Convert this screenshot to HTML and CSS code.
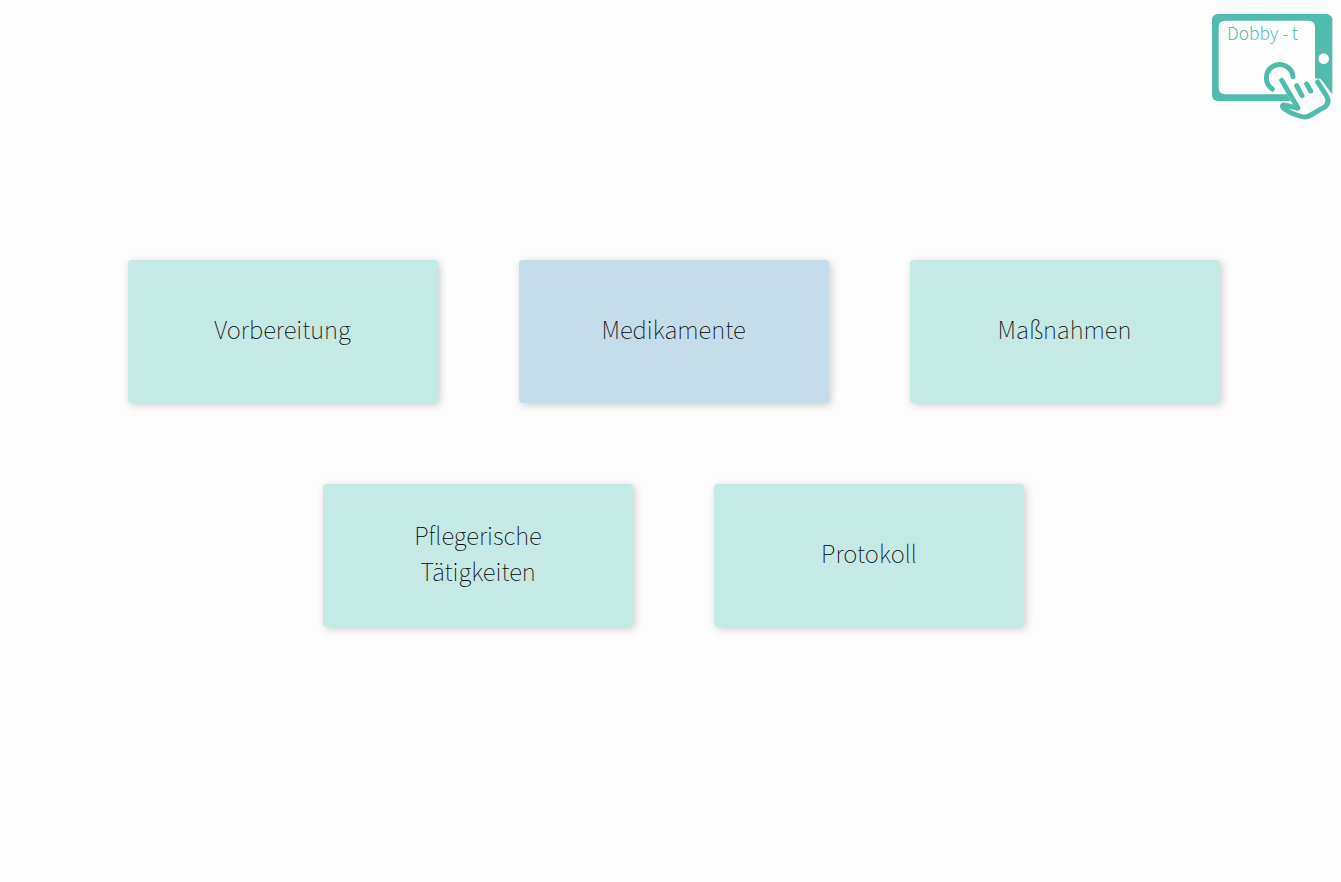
FILE: index.html
```html
<!DOCTYPE html>
<html lang="de">
<head>
  <meta charset="utf-8">
  <meta name="viewport" content="width=device-width, initial-scale=1">
  <title>Dobby - t</title>
  <link rel="stylesheet" href="styles.css">
</head>
<body>
  <header class="brand">
    <svg class="logo" viewBox="30 24 366 324" role="img" aria-label="Dobby - t">
      <rect class="logo-fill" x="33" y="27" width="361" height="261" rx="17"/>
      <rect class="logo-paper" x="53" y="47" width="289" height="221" rx="18"/>
      <circle class="logo-paper" cx="368" cy="161" r="16"/>
      <path class="logo-halo" d="M242 226 L288 243 L317 234 L345 227 Q353 225 358 232 L390 278 Q394 292 384 302 L314 342 L246 306 L262 297 L280 292 Z"/>
      <path class="logo-paper" d="M342 222 H358 L397 272 V300 H342 Z"/>
      <path class="logo-line" d="M214 252 A40 40 0 1 1 276 215"/>
      <path class="logo-line" d="M242 226 L291 309 Q288 311 279 307 L256 301 Q246 299 244 303 Q245 309 254 314 Q266 323 287 330 L303 335 Q314 338 324 333 L368 308 Q379 302 381 289 Q381 280 376 272 L350 231"/>
      <path class="logo-line" d="M287 242 L303 272 M317 237 L329 258"/>
      <text class="logo-text" x="78" y="105">Dobby - t</text>
    </svg>
  </header>
  <main class="page">
    <nav class="menu" aria-label="Hauptmenü">
      <button class="card" type="button">Vorbereitung</button>
      <button class="card card-blue" type="button">Medikamente</button>
      <button class="card" type="button">Maßnahmen</button>
      <button class="card" type="button">Pflegerische<br>Tätigkeiten</button>
      <button class="card" type="button">Protokoll</button>
    </nav>
  </main>
</body>
</html>
```

FILE: styles.css
```css
* {
  box-sizing: border-box;
}

body {
  margin: 0;
  background: #fdfdfd;
  color: #000;
  font-family: "Noto Sans CJK SC", "Noto Sans", sans-serif;
  font-weight: 100;
}

.brand {
  position: absolute;
  top: 13px;
  right: 8px;
}

.logo {
  display: block;
  width: 122px;
  height: 108px;
}

.logo-fill {
  fill: #50bdac;
}

.logo-paper {
  fill: #fdfdfd;
}

.logo-halo {
  fill: #fdfdfd;
  stroke: #fdfdfd;
  stroke-width: 14px;
  stroke-linejoin: round;
}

.logo-line {
  fill: none;
  stroke: #50bdac;
  stroke-width: 15px;
  stroke-linecap: round;
  stroke-linejoin: round;
}

.logo-text {
  fill: #50bdac;
  font-size: 52px;
  font-weight: 300;
}

.page {
  display: flex;
  min-height: 100vh;
  align-items: center;
  justify-content: center;
  padding: 5px 0 0 6px;
}

.menu {
  display: flex;
  flex-wrap: wrap;
  justify-content: center;
  gap: 81px;
  max-width: 1200px;
}

.card {
  width: 310px;
  min-height: 143px;
  padding: 14px 16px 20px;
  border: 0;
  border-radius: 4px;
  background: #c5e9e4;
  box-shadow: 2px 2px 8px rgba(0, 0, 0, 0.2);
  color: inherit;
  font: inherit;
  font-size: 24px;
  line-height: 36px;
  cursor: pointer;
}

.card-blue {
  background: #c5ddea;
}
```
